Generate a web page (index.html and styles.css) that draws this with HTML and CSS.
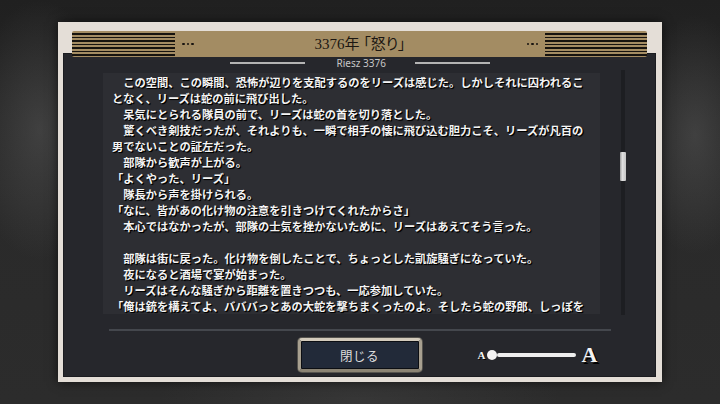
FILE: index.html
```html
<!DOCTYPE html>
<html lang="ja">
<head>
<meta charset="utf-8">
<title>3376年「怒り」</title>
<link rel="stylesheet" href="styles.css">
</head>
<body>
<div class="stage">
  <div class="frame">
    <div class="header">
      <div class="stripes"></div>
      <div class="dots"><span></span><span></span><span></span></div>
      <div class="title">3376年 「怒り」</div>
      <div class="dots"><span></span><span></span><span></span></div>
      <div class="stripes"></div>
    </div>
    <div class="panel">
      <div class="subrow">
        <div class="rule"></div>
        <div class="sub">Riesz 3376</div>
        <div class="rule"></div>
      </div>
      <div class="content">
        <div class="textbox">
          <div class="line">　この空間、この瞬間、恐怖が辺りを支配するのをリーズは感じた。しかしそれに囚われるこ</div>
          <div class="line">となく、リーズは蛇の前に飛び出した。</div>
          <div class="line">　呆気にとられる隊員の前で、リーズは蛇の首を切り落とした。</div>
          <div class="line">　驚くべき剣技だったが、それよりも、一瞬で相手の懐に飛び込む胆力こそ、リーズが凡百の</div>
          <div class="line">男でないことの証左だった。</div>
          <div class="line">　部隊から歓声が上がる。</div>
          <div class="line">「よくやった、リーズ」</div>
          <div class="line">　隊長から声を掛けられる。</div>
          <div class="line">「なに、皆があの化け物の注意を引きつけてくれたからさ」</div>
          <div class="line">　本心ではなかったが、部隊の士気を挫かないために、リーズはあえてそう言った。</div>
          <div class="line"> </div>
          <div class="line">　部隊は街に戻った。化け物を倒したことで、ちょっとした凱旋騒ぎになっていた。</div>
          <div class="line">　夜になると酒場で宴が始まった。</div>
          <div class="line">　リーズはそんな騒ぎから距離を置きつつも、一応参加していた。</div>
          <div class="line">「俺は銃を構えてよ、バババっとあの大蛇を撃ちまくったのよ。そしたら蛇の野郎、しっぽを</div>
        </div>
        <div class="track"><div class="thumb"></div></div>
      </div>
      <div class="separator"></div>
      <div class="bottom">
        <div></div>
        <div class="button">閉じる</div>
        <div class="slider">
          <span class="a-small">A</span>
          <span class="knob"></span>
          <span class="bar"></span>
          <span class="a-big">A</span>
        </div>
      </div>
    </div>
  </div>
</div>
</body>
</html>
```
FILE: styles.css
```css
html, body {
  margin: 0;
  padding: 0;
}
body {
  width: 720px;
  height: 404px;
  overflow: hidden;
  background-color: #272727;
  background-image:
    radial-gradient(ellipse 70px 130px at 40px 130px, rgba(95,95,95,0.45), rgba(95,95,95,0) 100%),
    radial-gradient(ellipse 60px 120px at 695px 135px, rgba(95,95,95,0.45), rgba(95,95,95,0) 100%),
    radial-gradient(ellipse 200px 60px at 360px 400px, rgba(70,70,70,0.4), rgba(70,70,70,0) 100%),
    linear-gradient(180deg, #202020 0%, #2a2a2a 50%, #2c2c2c 100%);
  font-family: "Noto Sans CJK JP", "Noto Sans", sans-serif;
}
.stage {
  padding: 22px 58px 0 58px;
}
.frame {
  width: 604px;
  height: 360px;
  box-sizing: border-box;
  background: #e4ded7;
  padding: 9px 6px 5px 5px;
  display: flex;
  flex-direction: column;
  box-shadow: 0 0 10px rgba(0,0,0,0.6);
}
.header {
  position: relative;
  z-index: 1;
  height: 26px;
  margin: 0 9px;
  background: #a38c63;
  border-radius: 2px;
  display: grid;
  grid-template-columns: 103px auto 1fr auto 102px;
  align-items: center;
}
.stripes {
  height: 100%;
  background: repeating-linear-gradient(180deg, rgba(0,0,0,0) 0, rgba(0,0,0,0) 2px, #16130f 2px, #16130f 3.5px);
}
.dots {
  display: flex;
  gap: 2px;
  margin: 0 7px;
}
.dots span {
  width: 2.5px;
  height: 2.5px;
  border-radius: 50%;
  background: #17130f;
}
.title {
  text-align: center;
  font-family: "Liberation Serif", "Noto Sans CJK JP", serif;
  font-size: 15px;
  color: #1c1712;
  font-feature-settings: "palt";
  line-height: 26px;
  white-space: nowrap;
}
.panel {
  flex: 1;
  margin-top: -4px;
  background: #26272c;
  display: flex;
  flex-direction: column;
  padding-top: 4px;
  box-shadow: inset 0 0 0 1px #1b1c20;
}
.subrow {
  height: 12px;
  display: flex;
  justify-content: center;
  align-items: center;
  gap: 32px;
}
.rule {
  width: 75px;
  height: 1.5px;
  background: #b4b4b4;
}
.sub {
  font-family: "Noto Sans", sans-serif;
  font-size: 10px;
  color: #c6c6c6;
  line-height: 12px;
  width: 46px;
  text-align: center;
  white-space: nowrap;
}
.content {
  display: flex;
  margin-top: 1px;
  padding-left: 40px;
}
.textbox {
  margin-top: 3px;
  width: 497px;
  height: 241px;
  box-sizing: border-box;
  background: #2d2e33;
  padding: 1px 0 0 9px;
  overflow: hidden;
}
.line {
  height: 16px;
  line-height: 16px;
  font-size: 11.25px;
  font-weight: 700;
  color: #f4f4f4;
  white-space: pre;
  text-shadow: 1px 1px 1px #000, 1px 1px 0 #000;
}
.track {
  margin-left: 21px;
  width: 4px;
  height: 245px;
  background: #1d1e22;
  padding-top: 82px;
  box-sizing: border-box;
}
.thumb {
  margin: 0 -1px;
  height: 29px;
  background: linear-gradient(90deg, #9a9a9a, #e0e0e0 40%, #c4c4c4);
  border-radius: 1px;
}
.separator {
  margin-top: 14px;
  margin-left: 46px;
  width: 502px;
  height: 1.5px;
  background: #44474d;
}
.bottom {
  margin-top: 7.5px;
  display: grid;
  grid-template-columns: 1fr auto 1fr;
  align-items: center;
}
.button {
  width: 124px;
  height: 34px;
  box-sizing: border-box;
  border: 3px solid;
  border-color: #d3cbbc #a8a090 #8b8474 #a8a090;
  border-radius: 4px;
  background: #222a39;
  box-shadow: inset 0 0 0 1px #0c0e13, 0 0 0 1px #55534e;
  color: #dedede;
  font-size: 12.5px;
  display: flex;
  align-items: center;
  justify-content: center;
  letter-spacing: 0.5px;
}
.slider {
  justify-self: start;
  margin-left: 56px;
  display: flex;
  align-items: center;
}
.a-small {
  font-family: "Liberation Serif", serif;
  font-weight: 700;
  font-size: 11px;
  color: #f2f2f2;
  text-shadow: 1px 1px 0 #000;
  margin-right: 2px;
  line-height: 12px;
}
.knob {
  width: 10px;
  height: 10px;
  border-radius: 50%;
  background: #f4f4f4;
}
.bar {
  width: 79px;
  height: 3.5px;
  border-radius: 2px;
  background: #eeeeee;
}
.a-big {
  font-family: "Liberation Serif", serif;
  font-weight: 700;
  font-size: 22px;
  color: #f4f4f4;
  text-shadow: 2px 2px 0 #000;
  margin-left: 5px;
  line-height: 24px;
}
```
